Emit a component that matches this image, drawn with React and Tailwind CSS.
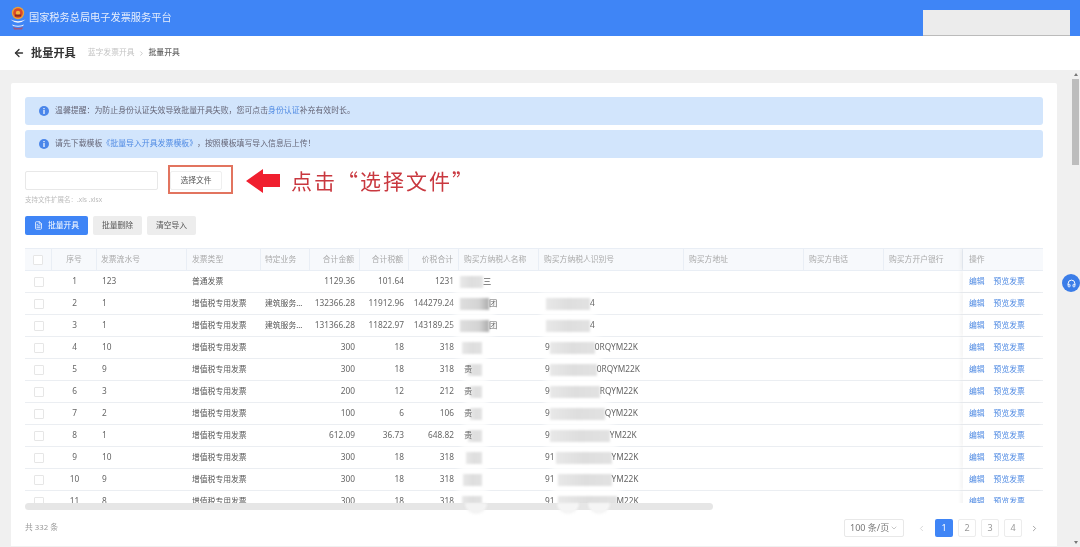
import { ArrowLeft, ChevronDown, ChevronLeft, ChevronRight, FileText, Headphones } from "lucide-react";

const columns = [
  { label: "", width: 27 },
  { label: "序号", width: 45, className: "justify-center" },
  { label: "发票流水号", width: 90, className: "pl-[4px]" },
  { label: "发票类型", width: 74, className: "pl-[5px]" },
  { label: "特定业务", width: 49, className: "pl-[4px]" },
  { label: "合计金额", width: 50, className: "justify-end pr-[5px]" },
  { label: "合计税额", width: 49, className: "justify-end pr-[5px]" },
  { label: "价税合计", width: 50, className: "justify-end pr-[5px]" },
  { label: "购买方纳税人名称", width: 80, className: "pl-[5px]" },
  { label: "购买方纳税人识别号", width: 145, className: "pl-[5px]" },
  { label: "购买方地址", width: 120, className: "pl-[5px]" },
  { label: "购买方电话", width: 80, className: "pl-[5px]" },
  { label: "购买方开户银行", width: 79, className: "pl-[5px]" },
];

// name / id: [text before the smudge, smudge width, text after, smudge offset]
const rows = [
  { no: 1, serial: "123", type: "普通发票", biz: "", amount: "1129.36", tax: "101.64", total: "1231", name: ["", 23, "三", -4], id: null },
  { no: 2, serial: "1", type: "增值税专用发票", biz: "建筑服务...", amount: "132366.28", tax: "11912.96", total: "144279.24", name: ["", 29, "团", -4], dark: true, id: ["", 44, "4", 1] },
  { no: 3, serial: "1", type: "增值税专用发票", biz: "建筑服务...", amount: "131366.28", tax: "11822.97", total: "143189.25", name: ["", 29, "团", -4], dark: true, id: ["", 44, "4", 1] },
  { no: 4, serial: "10", type: "增值税专用发票", biz: "", amount: "300", tax: "18", total: "318", name: ["", 20, "", -2], id: ["9", 45, "0RQYM22K", 0] },
  { no: 5, serial: "9", type: "增值税专用发票", biz: "", amount: "300", tax: "18", total: "318", name: ["贵", 14, "", -4], id: ["9", 47, "0RQYM22K", 0] },
  { no: 6, serial: "3", type: "增值税专用发票", biz: "", amount: "200", tax: "12", total: "212", name: ["贵", 12, "", -2], id: ["9", 50, "RQYM22K", 0] },
  { no: 7, serial: "2", type: "增值税专用发票", biz: "", amount: "100", tax: "6", total: "106", name: ["贵", 12, "", -2], id: ["9", 55, "QYM22K", 0] },
  { no: 8, serial: "1", type: "增值税专用发票", biz: "", amount: "612.09", tax: "36.73", total: "648.82", name: ["贵", 14, "", -4], id: ["9", 60, "YM22K", 0] },
  { no: 9, serial: "10", type: "增值税专用发票", biz: "", amount: "300", tax: "18", total: "318", name: ["", 16, "", 2], id: ["91", 56, "YM22K", 1] },
  { no: 10, serial: "9", type: "增值税专用发票", biz: "", amount: "300", tax: "18", total: "318", name: ["", 19, "", -1], id: ["91", 54, "YM22K", 3] },
  { no: 11, serial: "8", type: "增值税专用发票", biz: "", amount: "300", tax: "18", total: "318", name: ["", 20, "", -2], id: ["91", 59, "M22K", 3] },
];

function InfoDot() {
  return (
    <svg viewBox="0 0 10 10" className="h-[10px] w-[10px] shrink-0">
      <circle cx="5" cy="5" r="5" fill="#4a86ea" />
      <rect x="4.4" y="2" width="1.2" height="1.2" fill="#fff" />
      <rect x="4.4" y="4" width="1.2" height="4" fill="#fff" />
    </svg>
  );
}

function Logo() {
  return (
    <svg viewBox="0 0 16 24" className="h-[24px] w-[16px] shrink-0">
      <circle cx="8" cy="7" r="6.2" fill="#e9a23b" />
      <circle cx="8" cy="7" r="4.8" fill="#d9482b" />
      <circle cx="8" cy="7" r="2.2" fill="#f0b33f" />
      <rect x="5" y="8.5" width="6" height="2" fill="#8c2c1f" />
      <path d="M0.5 13.5 Q8 20 15.5 13.5 Q8 17 0.5 13.5Z" fill="#f3f6fb" />
      <path d="M2 18.5 Q8 21 14 18.5 L13 20 Q8 21.5 3 20Z" fill="#e8f0fc" />
      <path d="M3 21 Q8 23 13 21 L12 23.5 L4 23.5Z" fill="#a0567e" />
    </svg>
  );
}

function Check() {
  return <div className="h-[10px] w-[10px] rounded-[1px] border border-[#e6e6e6] bg-white" />;
}

// the smudged-out part of a value: text, grey block, text
function Masked({ value, dark }) {
  if (!value) return null;
  const [before, width, after, offset] = value;
  return (
    <div className="flex h-full items-center text-[8.3px]">
      {before && <span className="relative z-10">{before}</span>}
      <div
        style={{ width, marginLeft: offset }}
        className={`relative z-0 h-[12px] shrink-0 blur-[0.8px] shadow-[0_0_5px_5px_#fff] ${
          dark
            ? "bg-[linear-gradient(90deg,#dedede_0%,#d4d4d4_65%,#adadad_100%)]"
            : "bg-gradient-to-r from-[#e8e8e8] via-[#dedede] to-[#e2e2e2]"
        }`}
      />
      {after && <span className="relative z-10">{after}</span>}
    </div>
  );
}

function Row({ row }) {
  return (
    <div className="flex h-[22px] shrink-0 border-b border-[#ebeef2] text-[#666]">
      <div className="flex w-[27px] items-center justify-center"><Check /></div>
      <div className="flex w-[45px] items-center justify-center text-[8.3px]">{row.no}</div>
      <div className="flex w-[90px] items-center pl-[5px] text-[8.3px]">{row.serial}</div>
      <div className="flex w-[74px] items-center pl-[5px] text-[#555]">{row.type}</div>
      <div className="flex w-[49px] items-center pl-[4px] whitespace-nowrap text-[#555]">{row.biz}</div>
      <div className="flex w-[50px] items-center justify-end pr-[5px] text-[8.3px]">{row.amount}</div>
      <div className="flex w-[49px] items-center justify-end pr-[5px] text-[8.3px]">{row.tax}</div>
      <div className="flex w-[50px] items-center justify-end pr-[5px] text-[8.3px]">{row.total}</div>
      <div className="w-[80px] pl-[5px]">
        <Masked value={row.name} dark={row.dark} />
      </div>
      <div className="w-[145px] pl-[6px]">
        <Masked value={row.id} />
      </div>
      <div className="w-[120px]" />
      <div className="w-[80px]" />
      <div className="w-[79px]" />
      <div className="flex w-[80px] items-center gap-[9px] bg-white pl-[6px] text-[#4f8ae3] shadow-[-3px_0_3px_rgba(0,0,0,0.04)]">
        <span>编辑</span>
        <span>预览发票</span>
      </div>
    </div>
  );
}

function Table() {
  return (
    <div className="mt-[13px] w-[1018px]">
      <div className="flex h-[23px] border-y border-[#e9eef5] bg-[#f7f9fc] text-[#aaa]">
        {columns.map((col, i) => (
          <div
            key={i}
            style={{ width: col.width }}
            className={`flex items-center border-r border-[#e9eef5] whitespace-nowrap ${col.className || "justify-center"}`}
          >
            {i === 0 ? <Check /> : col.label}
          </div>
        ))}
        <div className="flex w-[80px] items-center pl-[6px] shadow-[-3px_0_3px_rgba(0,0,0,0.04)]">操作</div>
      </div>
      <div className="flex h-[232px] flex-col overflow-hidden">
        {rows.map((row) => (
          <Row key={row.no} row={row} />
        ))}
      </div>
      <div className="relative h-[7px] w-[688px] rounded-full bg-[#e6e6e6]">
        <div className="absolute top-0 left-[440px] h-[11px] w-[22px] rounded-b-full bg-[#f3f3f3] blur-[1px]" />
        <div className="absolute top-0 left-[532px] h-[11px] w-[22px] rounded-b-full bg-[#f5f5f5] blur-[1px]" />
        <div className="absolute top-0 left-[563px] h-[11px] w-[22px] rounded-b-full bg-[#f5f5f5] blur-[1px]" />
      </div>
    </div>
  );
}

function Pagination() {
  return (
    <div className="mr-[4px] flex items-center text-[9px] text-[#999]">
      <div className="mr-[13px] flex h-[18px] w-[60px] items-center justify-between rounded-[2px] border border-[#e8e8e8] px-[5px] text-[#777]">
        100 条/页
        <ChevronDown size={8} color="#aaa" />
      </div>
      <ChevronLeft size={9} color="#ccc" className="mr-[9px]" />
      <div className="flex gap-[5px]">
        <div className="flex h-[18px] w-[18px] items-center justify-center rounded-[2px] bg-[#3f85f6] text-white">1</div>
        {["2", "3", "4"].map((n) => (
          <div key={n} className="flex h-[18px] w-[18px] items-center justify-center rounded-[2px] border border-[#ececec]">
            {n}
          </div>
        ))}
      </div>
      <ChevronRight size={9} color="#888" className="ml-[8px]" />
    </div>
  );
}

export default function App() {
  return (
    <div className="relative flex h-[547px] w-[1080px] flex-col overflow-hidden bg-[#f0f0f0] text-[7.8px] blur-[0.4px] [font-family:'Noto_Sans','Noto_Sans_CJK_SC',sans-serif] [text-spacing-trim:space-all]">
      <header className="flex h-[36px] shrink-0 items-end justify-between bg-[#3f85f6] pr-[10px] pl-[10px]">
        <div className="flex h-full items-center gap-[3px]">
          <Logo />
          <span className="text-[10.2px] text-[#e6eefc]">国家税务总局电子发票服务平台</span>
        </div>
        <div className="h-[26px] w-[147px] border-b border-[#bbb] bg-[#ececec]" />
      </header>

      <div className="flex h-[34px] shrink-0 items-center bg-white pl-[13px]">
        <ArrowLeft size={12} strokeWidth={2.6} color="#333" />
        <span className="ml-[6px] text-[11.2px] font-bold text-[#333]">批量开具</span>
        <span className="ml-[12px] text-[#c4c4c4]">蓝字发票开具</span>
        <ChevronRight size={7} color="#aaa" className="mr-[4px] ml-[3px]" />
        <span className="font-medium text-[#666]">批量开具</span>
      </div>

      <div className="flex min-h-0 flex-1">
        <main className="mt-[13px] mb-[1px] ml-[11px] w-[1046px] rounded-t-[2px] bg-white px-[14px] pt-[14px]">
          <div className="flex h-[28px] w-[1018px] items-center gap-[6px] rounded-[3px] bg-[#d2e5fc] pl-[14px] text-[7.9px] text-[#667]">
            <InfoDot />
            <span>
              温馨提醒：为防止身份认证失效导致批量开具失败，您可点击<span className="text-[#4f8ae3]">身份认证</span>补充有效时长。
            </span>
          </div>
          <div className="mt-[5px] flex h-[28px] w-[1018px] items-center gap-[6px] rounded-[3px] bg-[#d2e5fc] pl-[14px] text-[7.9px] text-[#667]">
            <InfoDot />
            <span>
              请先下载模板<span className="text-[#4f8ae3]">《批量导入开具发票模板》</span>，按照模板填写导入信息后上传！
            </span>
          </div>

          <div className="mt-[7px] flex items-center">
            <div className="mt-[2px] h-[19px] w-[133px] rounded-[2px] border border-[#e8e8e8]" />
            <div className="ml-[10px] flex h-[29px] w-[65px] items-center border-2 border-[#e2745f]">
              <div className="mt-[2px] flex h-[19px] w-[52px] items-center justify-center rounded-[2px] border border-[#efefef] text-[#555]">
                选择文件
              </div>
            </div>
            <svg viewBox="0 0 34 24" className="mt-[2px] ml-[13px] h-[24px] w-[34px]">
              <polygon points="0,12 17,0 17,5 34,5 34,18 17,18 17,24" fill="#f01f2f" />
            </svg>
            <span className="mt-[2px] ml-[11px] text-[21px] leading-none tracking-[2px] whitespace-nowrap text-[#c9383f] [font-family:'Noto_Sans_CJK_SC',sans-serif]">
              点击“选择文件”
            </span>
          </div>

          <div className="mt-[1px] text-[6.5px] leading-[10px] text-[#bbb]">支持文件扩展名：.xls .xlsx</div>

          <div className="mt-[11px] flex gap-[5px]">
            <div className="flex h-[19px] w-[63px] items-center justify-center gap-[5px] rounded-[2px] bg-[#3f85f6] text-white">
              <FileText size={9} />
              批量开具
            </div>
            <div className="flex h-[19px] w-[49px] items-center justify-center rounded-[2px] bg-[#ededed] text-[#555]">批量删除</div>
            <div className="flex h-[19px] w-[49px] items-center justify-center rounded-[2px] bg-[#ededed] text-[#555]">清空导入</div>
          </div>

          <Table />

          <div className="mt-[9px] flex w-[1018px] items-center justify-between">
            <span className="text-[#999]">共 332 条</span>
            <Pagination />
          </div>
        </main>

        <div className="ml-[14px] flex w-[9px] flex-col items-center pt-[3px] pb-[3px]">
          <div className="h-0 w-0 border-x-[2.5px] border-b-[3px] border-x-transparent border-b-[#777]" />
          <div className="mt-[3px] h-[86px] w-[7px] bg-[#bdbdbd]" />
          <div className="mt-auto h-0 w-0 border-x-[2.5px] border-t-[3px] border-x-transparent border-t-[#777]" />
        </div>
      </div>

      <div className="absolute top-[274px] left-[1062px] flex h-[18px] w-[18px] items-center justify-center rounded-full bg-[#3b7de8]">
        <Headphones size={9} color="#fff" strokeWidth={2.5} />
      </div>
    </div>
  );
}
